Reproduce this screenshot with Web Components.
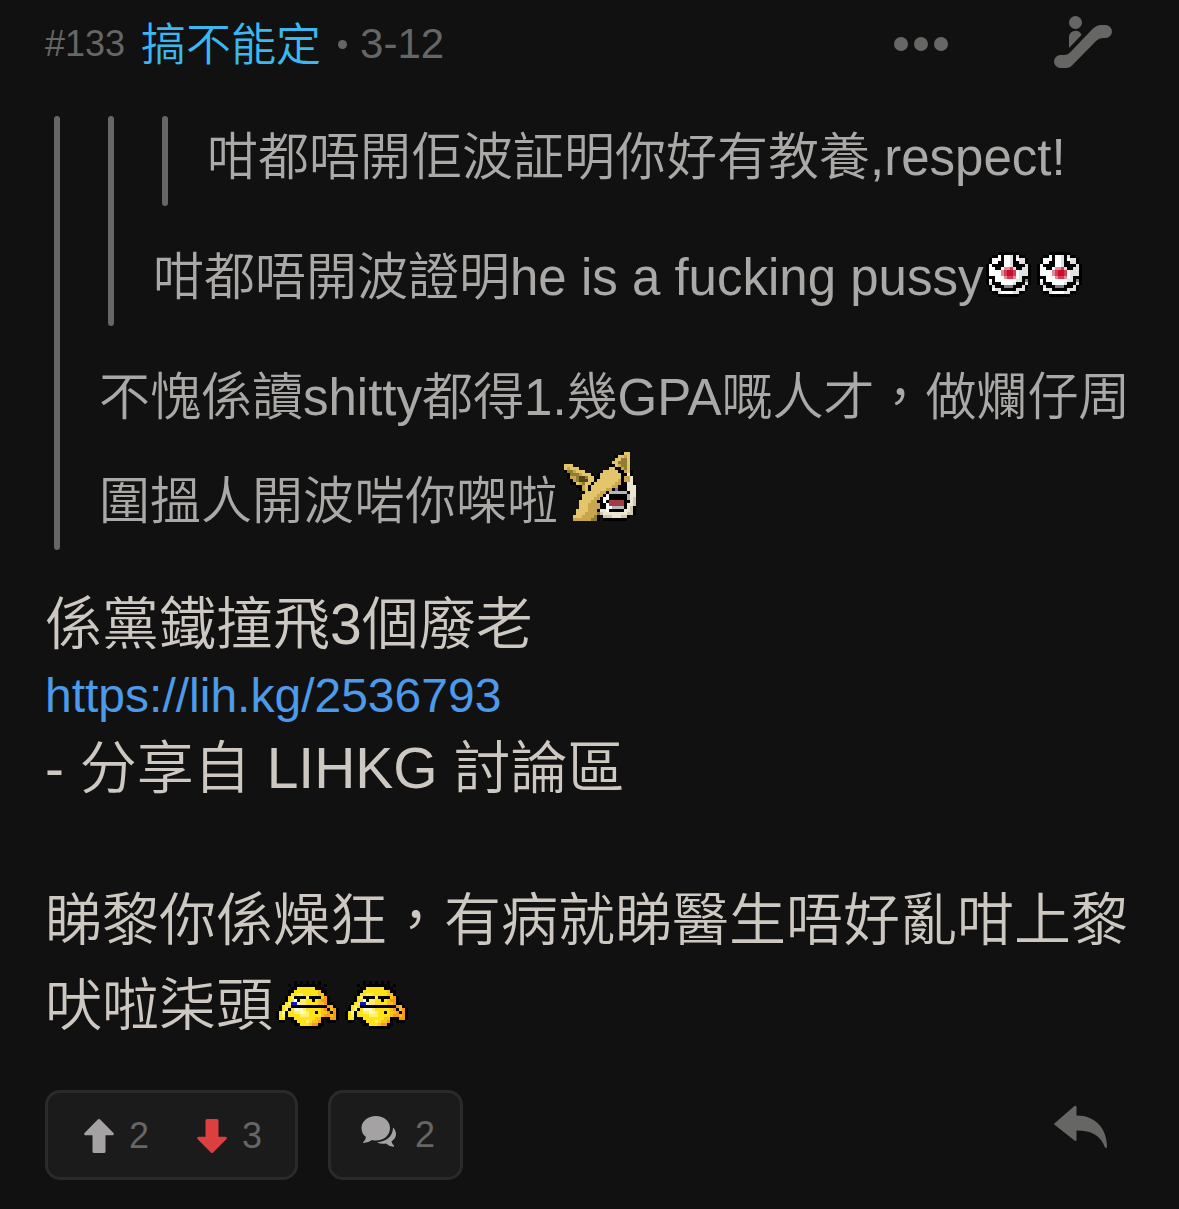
<!DOCTYPE html>
<html lang="zh-HK">
<head>
<meta charset="UTF-8">
<meta name="viewport" content="width=device-width, initial-scale=1">
<title>LIHKG #133</title>
<style>
  body {
    margin: 0;
    background: #111;
    color: #cdc8c1;
    font-family: "Liberation Sans", "Noto Sans CJK TC", sans-serif;
    font-weight: 350;
  }
</style>
</head>
<body>

<thread-post>
  <post-header slot="header" no="133" name="搞不能定" date="3-12"></post-header>

  <quote-block>
    <quote-block>
      <quote-block>咁都唔開佢波証明你好有教養,respect!</quote-block>
      咁都唔開波證明he is a fucking pussy<pixel-icon name="clown"></pixel-icon><pixel-icon name="clown"></pixel-icon>
    </quote-block>
    不愧係讀shitty都得1.幾GPA嘅人才，做爛仔周圍搵人開波啱你㗎啦<pixel-icon name="dog"></pixel-icon>
  </quote-block>

  <post-text>係黨鐵撞飛3個廢老<br><post-link href="https://lih.kg/2536793"></post-link><br>- 分享自 LIHKG 討論區</post-text>
  <post-text loose>睇黎你係燥狂，有病就睇醫生唔好亂咁上黎吠啦柒頭<pixel-icon name="sad"></pixel-icon><pixel-icon name="sad"></pixel-icon></post-text>

  <post-footer slot="footer" up="2" down="3" comments="2"></post-footer>
</thread-post>

<script>
// Small pixel emoji, one character per pixel
const PALETTE = {
  k: '#000', w: '#fff', s: '#e0e0e2', e: '#cdc8b4', g: '#b4b6be', d: '#808084',
  r: '#c8102e', p: '#e58a98', q: '#d83a54',
  y: '#e3c56c', o: '#c9a54e', v: '#8f7d32', n: '#57451a', c: '#ebe6d0', x: '#a03c42',
  Y: '#ffe31a', L: '#fff26a', O: '#fbc21c', A: '#f79a16', B: '#0b10d8', C: '#fffbc0',
};

const EMOJI = {
  clown: [
    '....kkkkkkk....',
    '..kkwkwwskskk..',
    '.kwwwkwwskwssk.',
    '.kwwkkwwskkssk.',
    'kwkkkkwwskkkksk',
    'kwwkkwppqskkssk',
    'kwwwwpqrrqwsssk',
    'kwwwwpqrrqwsssk',
    'kkkwwwpqqpwskkk',
    'kwkwwwwwwwsskdk',
    'kskkkwwwwskkksk',
    '.kskkkdddkkksk.',
    '.kwsskkkkksssk.',
    '..kkswwwwsskk..',
    '....kkkkkkk....',
  ],
  dog: [
    '...................kyy..',
    '.................kyyoy..',
    '.................yyvvy..',
    '................yyvvvy..',
    'yyy............kkyovvy..',
    'yoyyy..........yykkovy..',
    'kvvoyyy......yyyyykkoyk.',
    '.kvvvoyyyk.kyyyyyyykkck.',
    '.koovnnvyykkyyyyyyykooc.',
    '..kovnnnyykyyyyyyyokooc.',
    '..kkyovyykyyyyyyyookkcck',
    '....kkoykyyyyyyyookkkccc',
    '.....koykyyyyyookdkkkccc',
    '......kyyyyyookggggggkcc',
    '......yyyyyookwkkkkkkgcc',
    '.....kyyyyookwwkkkkkkgce',
    '.....yyyyookkwkxxxxxkkce',
    '.....yyyooookkwxxxxxkcce',
    '.....yyyooookkwwggggkcek',
    '....yyyyoookccwkkkkkccek',
    '....yyyoooovecccccccceek',
    '...yyyoooovk.eeeccceek..',
    '...oooooovvk.kkkkkkkk...',
  ],
  sad: [
    '......k.k.k.k.k......',
    '....k.kkkkkkkkk.k....',
    '.....kkYYYYYYkkk.....',
    '....kkYYYYYYYYOkk....',
    '....kYYLLYYYYYOOk....',
    '...kYLkkkkLkkkkOAk...',
    '...kYYwkLLYYkYOAAk...',
    '..kYLBBCLLYYYYOOAkk..',
    '.kYLYkkkkkkkkkkkkAOk.',
    '.kYLkYCCCLYYYYYOAkOAk',
    'kYCkYYLLCCLYYkYOOAkAk',
    'kYLkYYYYLLLYYYYOAAOAk',
    'kYYkkkYYYYYYYOOkkkAAk',
    '.kk..kkYYYLYOOAk.kkk.',
    '......kkYYYOAAkk.....',
    '........kkkkkkk......',
  ],
};

class PixelIcon extends HTMLElement {
  connectedCallback() {
    const rows = EMOJI[this.getAttribute('name')];
    const width = rows[0].length;
    const rects = rows.map((row, y) =>
      [...row].map((c, x) => c === '.' ? '' : `<rect x="${x}" y="${y}" width="1" height="1" fill="${PALETTE[c]}"/>`).join('')
    ).join('');

    this.attachShadow({ mode: 'open' }).innerHTML = /* html */ `
      <style>
        :host { display: inline-block; margin: 0 3px; line-height: 0; }
        :host([name="clown"]) { vertical-align: -2px; }
        :host([name="dog"]) { margin: 12px 6px 0; vertical-align: -2px; }
        :host([name="sad"]) { vertical-align: -4px; }
        svg { display: block; }
      </style>
      <svg width="${width * 3}" height="${rows.length * 3}" viewBox="0 0 ${width} ${rows.length}" shape-rendering="crispEdges" aria-hidden="true">${rects}</svg>
    `;
  }
}

class ThreadPost extends HTMLElement {
  constructor() {
    super();
    this.attachShadow({ mode: 'open' }).innerHTML = /* html */ `
      <style>
        :host { display: block; }
        article { padding: 0 44px 29px 45px; }
        main { display: flex; flex-direction: column; padding-top: 28px; }
      </style>
      <article>
        <slot name="header"></slot>
        <main><slot></slot></main>
        <slot name="footer"></slot>
      </article>
    `;
  }
}

class PostHeader extends HTMLElement {
  connectedCallback() {
    this.attachShadow({ mode: 'open' }).innerHTML = /* html */ `
      <style>
        :host { display: flex; align-items: center; height: 88px; color: #666; }
        .no { font-size: 36px; }
        .name { margin-left: 16px; padding-bottom: 5px; font-size: 45px; color: #3ab8f0; text-decoration: none; }
        .dot { width: 9px; height: 9px; margin: 0 13px 0 17px; border-radius: 50%; background: #666; }
        time { font-size: 42px; }
        .tools { display: flex; align-items: center; gap: 105px; margin: 0 22px 0 auto; }
        button { padding: 0; border: 0; background: none; color: #666664; }
        svg { display: block; fill: currentColor; }
      </style>
      <span class="no">#${this.getAttribute('no')}</span>
      <a class="name" href="#user">${this.getAttribute('name')}</a>
      <i class="dot"></i>
      <time>${this.getAttribute('date')}</time>
      <div class="tools">
        <button type="button" aria-label="More">
          <svg width="54" height="14" viewBox="0 0 54 14"><circle cx="7" cy="7" r="7"/><circle cx="27" cy="7" r="7"/><circle cx="47" cy="7" r="7"/></svg>
        </button>
        <button type="button" aria-label="Jump">
          <svg width="60" height="56" viewBox="0 0 60 56">
            <circle cx="22.500" cy="6.500" r="6.500"/>
            <path d="M16 32V20.500a6.500 6.500 0 0 1 12.500-1.500Z"/>
            <path d="M7.500 39H11Q14.500 39 17 36.500L40 12.500Q43.500 9 47 9H52.500a6.500 6.500 0 0 1 0 13H50Q46 22 43 25L20 48.500Q17 52 13 52H7.500a6.500 6.500 0 0 1 0-13Z"/>
          </svg>
        </button>
      </div>
    `;
  }
}

class QuoteBlock extends HTMLElement {
  constructor() {
    super();
    this.attachShadow({ mode: 'open' }).innerHTML = /* html */ `
      <style>
        :host { display: block; color: #aaa9a7; font-size: 51px; line-height: 84px; }
        blockquote { display: flex; gap: 39px; margin: 0 0 0 9px; }
        .bar { flex: none; width: 6px; border-radius: 3px; background: #666664; }
        .text { flex: 1; min-width: 0; padding-bottom: 6px; }
        ::slotted(quote-block) { margin-bottom: 30px; }
      </style>
      <blockquote>
        <div class="bar"></div>
        <div class="text"><slot></slot></div>
      </blockquote>
    `;
  }
}

class PostText extends HTMLElement {
  constructor() {
    super();
    this.attachShadow({ mode: 'open' }).innerHTML = /* html */ `
      <style>
        :host { display: block; margin-top: 38px; font-size: 57px; line-height: 72px; }
        :host([loose]) { margin-top: 74px; line-height: 85px; }
      </style>
      <slot></slot>
    `;
  }
}

class PostLink extends HTMLElement {
  connectedCallback() {
    const href = this.getAttribute('href');
    this.attachShadow({ mode: 'open' }).innerHTML = /* html */ `
      <style>
        :host { line-height: 1; }
        a { color: #4c9aea; font-size: 48px; text-decoration: none; vertical-align: 4px; }
      </style>
      <a href="${href}">${href}</a>
    `;
  }
}

class PostFooter extends HTMLElement {
  connectedCallback() {
    this.attachShadow({ mode: 'open' }).innerHTML = /* html */ `
      <style>
        :host { display: flex; align-items: center; gap: 30px; margin-top: 42px; }
        .box {
          display: flex;
          box-sizing: border-box;
          height: 90px;
          padding: 2px 33px 0 36px;
          gap: 48px;
          border: 3px solid #2a2a2a;
          border-radius: 15px;
          background: #1b1b1b;
        }
        .talk { padding: 0 25px 0 30px; }
        button {
          display: flex;
          align-items: center;
          gap: 15px;
          padding: 0;
          border: 0;
          background: none;
          color: #666;
          font: inherit;
          font-size: 36px;
        }
        svg { display: block; fill: #a5a2a3; }
        .down svg { fill: #db3f40; }
        .talk button { gap: 18px; }
        .reply { margin: 0 27px 0 auto; }
        .reply svg { fill: #666664; }
      </style>
      <div class="box">
        <button type="button" class="up" aria-label="Like">
          <svg width="30" height="34" viewBox="0 0 30 34"><path d="M13.800.6Q15-.5 16.200.6L29.500 14Q30.500 16 28.500 16.300H21.500V32.500Q21.500 34 20 34H10Q8.500 34 8.500 32.500V16.300H1.500Q-.5 16 .5 14Z"/></svg>
          <span>${this.getAttribute('up')}</span>
        </button>
        <button type="button" class="down" aria-label="Dislike">
          <svg width="30" height="34" viewBox="0 0 30 34"><path d="M13.800 33.400Q15 34.500 16.200 33.400L29.500 20Q30.500 18 28.500 17.700H21.500V1.500Q21.500 0 20 0H10Q8.500 0 8.500 1.500V17.700H1.500Q-.5 18 .5 20Z"/></svg>
          <span>${this.getAttribute('down')}</span>
        </button>
      </div>
      <div class="box talk">
        <button type="button" aria-label="Comments">
          <svg width="36" height="38" viewBox="0 0 36 38">
            <path d="M15 0C23 0 29 5 29 12C29 19 23 24.500 15 24.500Q12.500 24.500 11 24Q7 27 2.500 27Q1.500 26.500 2.500 25.700Q4.500 24 5 21C2 19 .5 16 .5 12C.5 5 7 0 15 0Z"/>
            <path d="M32 11.500C36.500 16 36 22 30.500 25.500Q31 28 33 29.500Q33.500 30.500 32.500 30.700Q28 30.500 25 27.500Q20 28.500 16 26.300C26 25.500 32 20 32 11.500Z"/>
          </svg>
          <span>${this.getAttribute('comments')}</span>
        </button>
      </div>
      <button type="button" class="reply" aria-label="Reply">
        <svg width="54" height="66" viewBox="0 0 54 66"><path d="M.6 21.200L20.500 4Q22.500 3 22.500 5.500V13.500C42 13.500 53 27 53 45Q52.500 46.500 51 45.500C47 34 38 28.500 22.500 28.500V37Q22.500 40 20.500 38.500L.6 22.800Q-.2 22 .6 21.200Z"/></svg>
      </button>
    `;
  }
}

customElements.define('pixel-icon', PixelIcon);
customElements.define('thread-post', ThreadPost);
customElements.define('post-header', PostHeader);
customElements.define('quote-block', QuoteBlock);
customElements.define('post-text', PostText);
customElements.define('post-link', PostLink);
customElements.define('post-footer', PostFooter);
</script>
</body>
</html>
